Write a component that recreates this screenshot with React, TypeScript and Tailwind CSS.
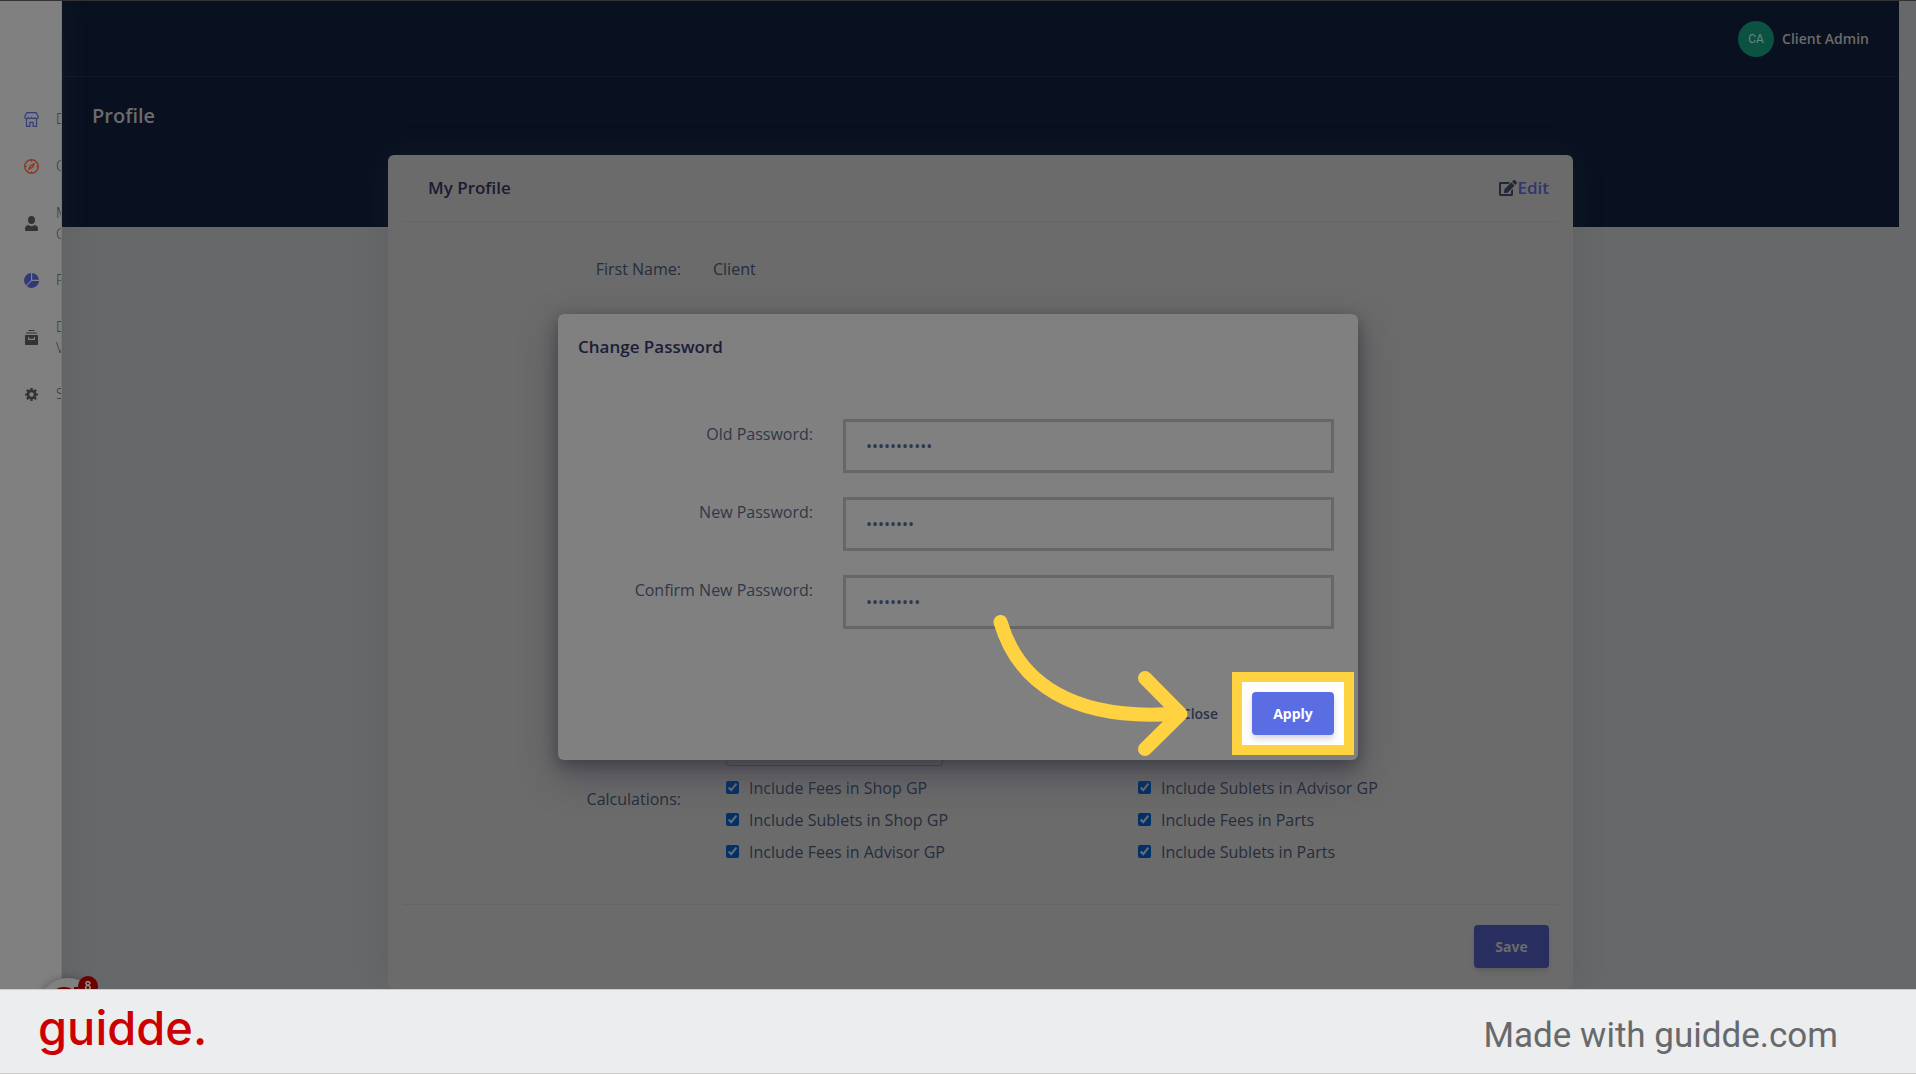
import type { ReactNode } from 'react'
import { FaEdit } from 'react-icons/fa'

interface NavItem {
  lines: string[]
  color: string
  icon: ReactNode
}

const navItems: NavItem[] = [
  {
    lines: ['D'],
    color: 'text-[#343d78]',
    icon: (
      <g fill="none" stroke="currentColor" strokeWidth="1.200">
        <path d="M3 .6h9l2.400 4.200c0 1-.7 1.800-1.800 1.800S10.800 6 10.800 5.600c-.3.600-.9 1-1.700 1S7.800 6.200 7.500 5.600c-.3.600-.9 1-1.700 1s-1.400-.4-1.700-1c-.3.600-.9 1-1.700 1C1.300 6.600.6 5.800.6 4.800z" />
        <path d="M2.500 6.600v7.800h3.400v-4h3.200v4h3.400V6.600" />
      </g>
    ),
  },
  {
    lines: ['C'],
    color: 'text-[#8c3822]',
    icon: (
      <>
        <circle cx="7.500" cy="7.500" r="6.800" fill="none" stroke="currentColor" strokeWidth="1.400" />
        <path d="M7.500 1v1.800M7.500 12.200V14M1 7.500h1.800M12.200 7.500H14" stroke="currentColor" />
        <path fillRule="evenodd" d="M11.500 3.500 8.900 8.900 3.500 11.500l2.600-5.400zM7.500 6.700a.8.8 0 1 0 0 1.600.8.8 0 0 0 0-1.600z" fill="currentColor" />
      </>
    ),
  },
  {
    lines: ['M', 'C'],
    color: 'text-[#333333]',
    icon: (
      <>
        <ellipse cx="7.500" cy="4" rx="3.500" ry="4" fill="currentColor" />
        <path d="M4.200 9c2 1.500 4.600 1.500 6.600 0 2 .3 3.200 1.600 3.200 3.500V14c0 .6-.4 1-1 1H2c-.6 0-1-.4-1-1v-1.500C1 10.600 2.200 9.300 4.200 9z" fill="currentColor" />
      </>
    ),
  },
  {
    lines: ['P'],
    color: 'text-[#30397a]',
    icon: (
      <>
        <path d="M7 0v7.200L1.900 12.300A7.500 7.500 0 0 1 7 0z" fill="currentColor" />
        <path d="M8.200 0v6.800H15A7.500 7.500 0 0 0 8.200 0z" fill="currentColor" />
        <path d="M7.800 8H15A7.500 7.500 0 0 1 2.700 13.100z" fill="currentColor" />
      </>
    ),
  },
  {
    lines: ['D', 'V'],
    color: 'text-[#333333]',
    icon: (
      <>
        <path d="M4.500 0h6v1h-6zM2 2.500h11v1H2z" fill="currentColor" />
        <path fillRule="evenodd" d="M2 5h11c.6 0 1 .4 1 1v8c0 .6-.4 1-1 1H2c-.6 0-1-.4-1-1V6c0-.6.4-1 1-1zm2 2v3h7V7H9.800v1.700H5.200V7z" fill="currentColor" />
      </>
    ),
  },
  {
    lines: ['S'],
    color: 'text-[#333333]',
    icon: (
      <>
        <circle cx="7.500" cy="7.500" r="3.600" fill="none" stroke="currentColor" strokeWidth="2.600" />
        <path
          d="M7.500 1v2M7.500 12v2M1 7.500h2M12 7.500h2M2.900 2.900l1.500 1.500M10.600 10.600l1.500 1.500M2.900 12.100l1.500-1.500M10.600 4.400l1.500-1.500"
          stroke="currentColor"
          strokeWidth="2.200"
        />
      </>
    ),
  },
]

const calculations = [
  'Include Fees in Shop GP',
  'Include Sublets in Advisor GP',
  'Include Sublets in Shop GP',
  'Include Fees in Parts',
  'Include Fees in Advisor GP',
  'Include Sublets in Parts',
]

const passwordFields = [
  { id: 'old-password', label: 'Old Password:', value: 'oldpassword' },
  { id: 'new-password', label: 'New Password:', value: 'newpassw' },
  { id: 'confirm-password', label: 'Confirm New Password:', value: 'newpasswo' },
]

function Sidebar() {
  return (
    <nav className="relative z-10 w-[62px] shrink-0 overflow-hidden border-r border-[#777777] bg-[#808080] pt-[95px] shadow-[0_0_32px_rgba(57,64,71,0.2)]">
      <ul>
        {navItems.map((item, i) => (
          <li key={i}>
            <a
              href="#"
              className={`flex items-center gap-[17px] pl-6 text-sm font-light ${item.lines.length > 1 ? 'h-[67px]' : 'h-[47px]'}`}
            >
              <svg viewBox="0 0 15 15" className={`size-[15px] shrink-0 ${item.color}`}>
                {item.icon}
              </svg>
              <span className="pb-0.5 leading-[21px] text-[#333333]">
                {item.lines.map((line) => (
                  <span key={line} className="block">
                    {line}
                  </span>
                ))}
              </span>
            </a>
          </li>
        ))}
      </ul>
    </nav>
  )
}

function ProfileCard() {
  return (
    <section className="mx-auto mt-[25px] flex w-[1185px] max-w-full flex-1 flex-col rounded-md bg-[#6b6b6b] px-[15px] text-base text-[#262d3d] shadow-[0_0_32px_rgba(57,64,71,0.2)]">
      <div className="flex h-[67px] items-center justify-between border-b border-[#646566] pr-[9px] pl-[25px] text-[17px]">
        <h2 className="font-semibold text-[#1a1a33]">My Profile</h2>
        <a href="#" className="flex items-center font-semibold text-[#30356b]">
          <FaEdit className="size-[18px] text-[#222838]" />
          Edit
        </a>
      </div>
      <dl className="flex gap-8 pt-[35px]">
        <dt className="w-[278px] text-right">First Name:</dt>
        <dd>Client</dd>
      </dl>
      <div className="flex flex-1 flex-col justify-end pb-[14px] pl-[323px]">
        <input aria-label="Value" className="h-11 w-[217px] rounded border border-[#4d4e55] bg-[#6b6b6b]" />
      </div>
      <div className="flex gap-[45px] pb-7">
        <span className="w-[278px] pt-[3px] text-right leading-[32px]">Calculations:</span>
        <div className="grid flex-1 grid-cols-[412px_1fr]">
          {calculations.map((label) => (
            <label key={label} className="flex h-8 items-start gap-[10px]">
              <input type="checkbox" defaultChecked className="mt-[1px] size-[13px] accent-[#0075ff] brightness-[.42]" />
              <span className="-mt-1">{label}</span>
            </label>
          ))}
        </div>
      </div>
      <div className="flex justify-end border-t border-[#646566] pt-5 pr-[9px] pb-[21px]">
        <button className="h-[43px] w-[75px] rounded bg-[#282f60] text-sm font-bold text-[#6b6b6b] shadow-md">
          Save
        </button>
      </div>
    </section>
  )
}

function ChangePasswordModal() {
  return (
    <div
      role="dialog"
      aria-label="Change Password"
      className="absolute top-[313px] left-1/2 z-20 flex w-[800px] -translate-x-1/2 flex-col rounded-md bg-[#808080] text-base text-[#303748] shadow-[0_15px_35px_rgba(50,50,70,0.5),0_5px_15px_rgba(0,0,0,0.3)]"
    >
      <h2 className="px-5 pt-[21px] text-[17px] leading-6 font-semibold text-[#1c1c38]">Change Password</h2>
      <form className="flex flex-col gap-6 pt-[60px] pr-6">
        {passwordFields.map((field) => (
          <div key={field.id} className="flex justify-end gap-[30px]">
            <label htmlFor={field.id} className="pt-[3px]">
              {field.label}
            </label>
            <input
              id={field.id}
              type="password"
              defaultValue={field.value}
              className="h-[54px] w-[491px] border-3 border-[#676767] bg-transparent px-5"
            />
          </div>
        ))}
      </form>
      <div className="mt-[43px] flex items-center justify-end gap-[14px] pr-1 pb-[5px]">
        <button className="text-sm font-semibold text-[#2c3345]">Close</button>
        <div className="border-10 border-[#ffd242] bg-white p-[10px]">
          <button className="h-[43px] w-[82px] rounded bg-[#5a6de3] text-sm font-bold text-white shadow-[0_4px_6px_rgba(50,50,93,0.2)]">
            Apply
          </button>
        </div>
      </div>
      {/* pointer towards the Apply button */}
      <svg
        viewBox="0 0 210 150"
        className="absolute right-[160px] bottom-0 h-[150px] w-[210px]"
        fill="none"
        stroke="#ffd242"
        strokeWidth="14"
        strokeLinecap="round"
        strokeLinejoin="round"
      >
        <path d="M12.500 12C30 72 84 112 190 103.500" />
        <path d="M157 68l35.500 36L157 139" />
      </svg>
    </div>
  )
}

function ChatWidget() {
  return (
    <div className="absolute top-[977px] left-[38px] z-20 size-[60px] rounded-full bg-[#808080] shadow-[0_0_8px_rgba(0,0,0,0.3)]">
      <svg viewBox="0 0 60 60" className="size-[60px]" fill="none" stroke="#660000" strokeWidth="4">
        <circle cx="26" cy="25" r="14" />
        <path d="M38 9v36" />
      </svg>
      <span className="absolute -top-[2px] left-10 flex size-5 items-center justify-center rounded-full bg-[#6b0000] text-xs font-semibold text-[#999999]">
        8
      </span>
    </div>
  )
}

export default function App() {
  return (
    <div className="flex h-screen flex-col overflow-hidden bg-[#676869] font-['Open_Sans',sans-serif]">
      <div className="relative flex min-h-0 flex-1 overflow-hidden border-t border-[#333336]">
        <Sidebar />
        <main className="mr-[17px] flex flex-1 flex-col bg-[linear-gradient(#091120,#091120)] bg-[length:100%_226px] bg-no-repeat">
          <header className="flex h-[76px] items-center justify-end gap-2 border-b border-[#101828] pr-[30px] text-sm font-semibold text-[#6b6b6b]">
            <span className="flex size-9 items-center justify-center rounded-full bg-[#0c5242] font-['Roboto',sans-serif] text-xs font-normal text-[#6b8780]">
              CA
            </span>
            <span>Client Admin</span>
          </header>
          <h1 className="px-[30px] pt-[25px] text-xl font-semibold text-[#6b6b6b]">Profile</h1>
          <ProfileCard />
        </main>
        <ChangePasswordModal />
        <ChatWidget />
      </div>
      <footer className="z-30 flex h-[85px] shrink-0 items-center justify-between border-y border-[#cccccc] bg-[#ecedef] pr-[78px] pl-[38px]">
        <a href="#" className="pb-2 font-['Inter',sans-serif] text-[47px] leading-[56px] font-medium text-[#cc0000]">
          guidde.
        </a>
        <span className="pt-2 font-['Roboto',sans-serif] text-[35px] leading-[48px] text-[#67696b]">
          Made with guidde.com
        </span>
      </footer>
    </div>
  )
}
